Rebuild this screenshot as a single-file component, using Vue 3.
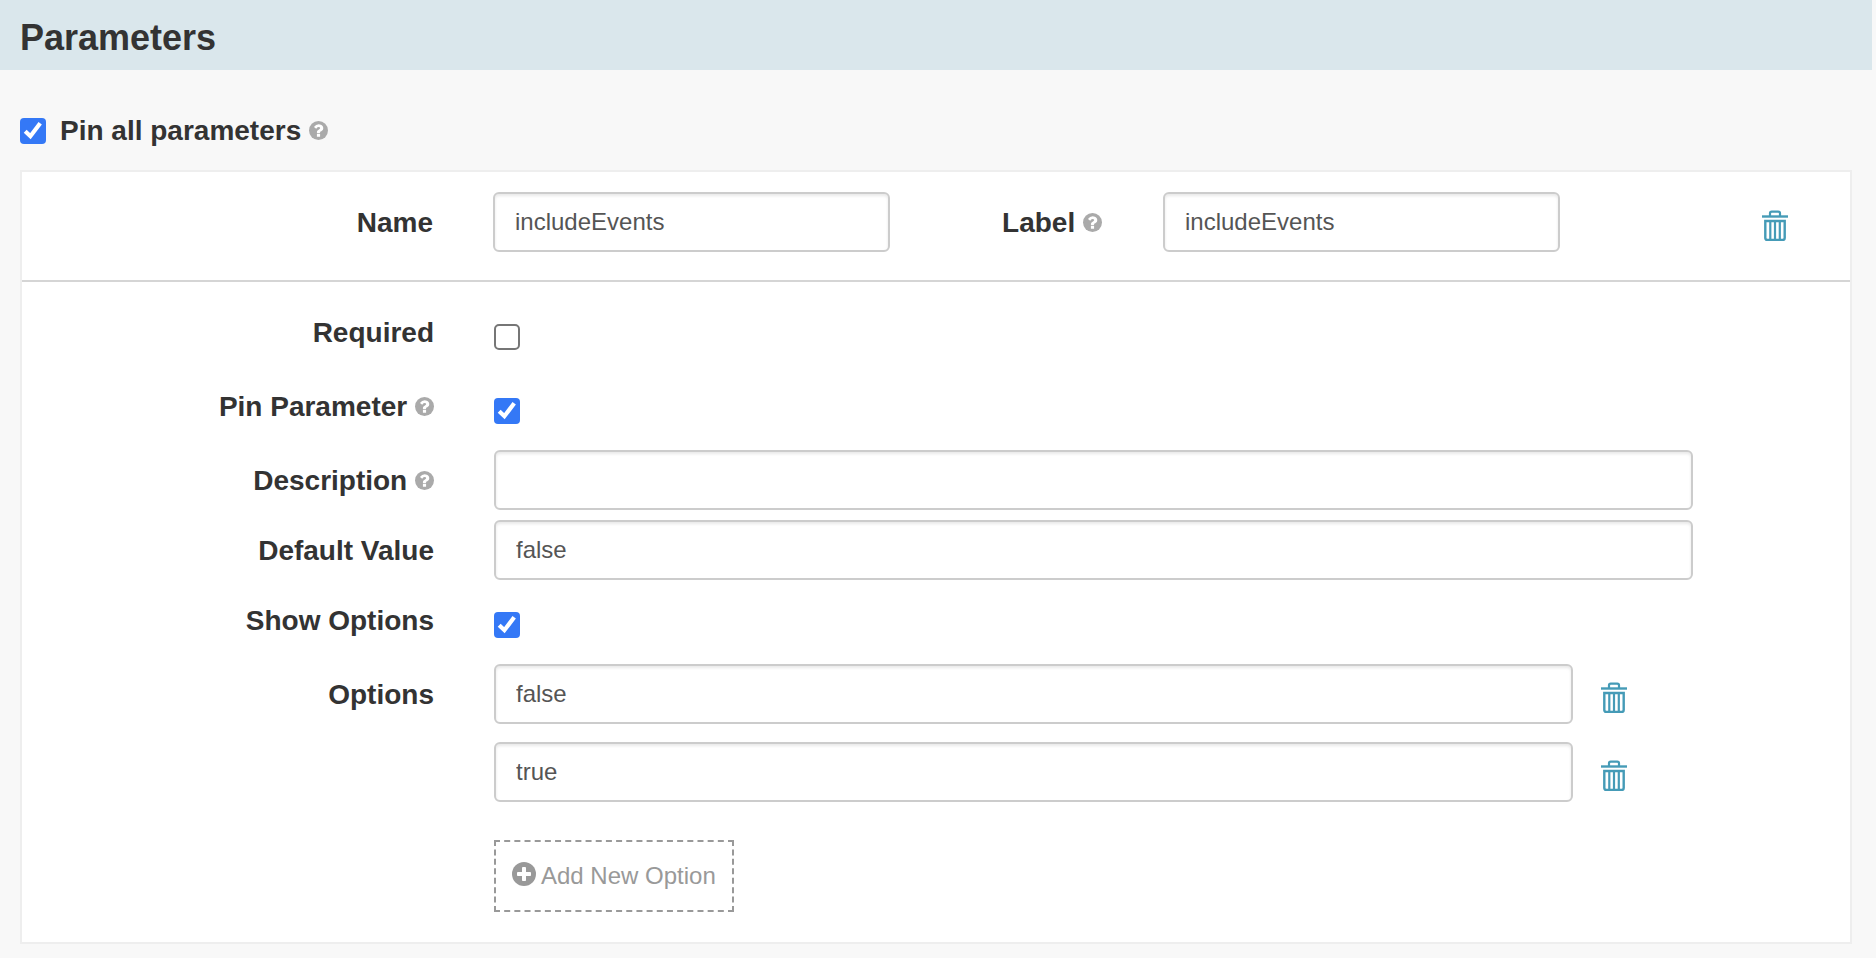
<script setup>
import { h, reactive } from 'vue'

const question = 'M1024 1376v-192q0-14-9-23t-23-9h-192q-14 0-23 9t-9 23v192q0 14 9 23t23 9h192q14 0 23-9t9-23zM1280 704q0-88-55.500-163t-138.500-116-170-41q-243 0-371 213-15 24 8 42l132 100q7 6 19 6 16 0 25-12 53-68 86-92 34-24 86-24 48 0 85.500 26t37.500 59q0 38-20 61t-68 45q-63 28-115.500 86.500t-52.500 125.500v36q0 14 9 23t23 9h192q14 0 23-9t9-23q0-19 21.500-49.500t54.500-49.500q32-18 49-28.500t46-35 44.500-48 28-60.500 12.500-81z'
const plus = 'M1344 960v-128q0-26-19-45t-45-19h-256v-256q0-26-19-45t-45-19h-128q-26 0-45 19t-19 45v256h-256q-26 0-45 19t-19 45v128q0 26 19 45t45 19h256v256q0 26 19 45t45 19h128q26 0 45-19t19-45v-256h256q26 0 45-19t19-45z'

const RoundIcon = (props) =>
  h('svg', { viewBox: '128 128 1536 1536', 'aria-hidden': 'true' }, [
    h('circle', { cx: 896, cy: 896, r: 768, fill: 'currentColor' }),
    h('path', { d: props.glyph, fill: '#fff' }),
  ])
RoundIcon.props = ['glyph']

const TrashIcon = () =>
  h('svg', { viewBox: '0 0 26 31', fill: 'none', stroke: 'currentColor', 'stroke-width': 2.2 }, [
    h('path', { d: 'M0 6.500h26', 'stroke-width': 2.4 }),
    h('path', { d: 'M8 6V3.200q0-1.600 1.700-1.600h6.600q1.700 0 1.700 1.600V6' }),
    h('path', { d: 'M3.300 11h19.400v17q0 2-2 2H5.300q-2 0-2-2z', 'stroke-width': 2.4 }),
    h('path', { d: 'M8.300 11v19M13 11v19M17.800 11v19' }),
  ])

const CheckMark = () =>
  h('svg', { viewBox: '0 0 26 26', fill: 'none', stroke: '#fff', 'stroke-width': 4.2 }, [
    h('path', { d: 'M5.200 13.200L10.400 18.200L20.200 5.200' }),
  ])

const form = reactive({
  pinAll: true,
  name: 'includeEvents',
  label: 'includeEvents',
  required: false,
  pinned: true,
  description: '',
  defaultValue: 'false',
  showOptions: true,
  options: ['false', 'true'],
})
</script>

<template>
  <main class="page">
    <header class="title-bar"><h1>Parameters</h1></header>

    <div class="pin-all">
      <label class="check">
        <input v-model="form.pinAll" type="checkbox" />
        <CheckMark v-if="form.pinAll" />
      </label>
      <span class="caption">Pin all parameters</span>
      <RoundIcon class="help" :glyph="question" />
    </div>

    <section class="panel">
      <div class="panel-head">
        <div class="caption name-caption">Name</div>
        <input v-model="form.name" class="field" type="text" />
        <div class="caption label-caption">Label <RoundIcon class="help" :glyph="question" /></div>
        <input v-model="form.label" class="field" type="text" />
        <button class="trash head-trash" type="button"><TrashIcon /></button>
      </div>

      <div class="rows">
        <div class="row loose">
          <div class="caption">Required</div>
          <label class="check">
            <input v-model="form.required" type="checkbox" />
            <CheckMark v-if="form.required" />
          </label>
        </div>
        <div class="row loose">
          <div class="caption">Pin Parameter <RoundIcon class="help" :glyph="question" /></div>
          <label class="check">
            <input v-model="form.pinned" type="checkbox" />
            <CheckMark v-if="form.pinned" />
          </label>
        </div>
        <div class="row">
          <div class="caption">Description <RoundIcon class="help" :glyph="question" /></div>
          <input v-model="form.description" class="field" type="text" />
        </div>
        <div class="row">
          <div class="caption">Default Value</div>
          <input v-model="form.defaultValue" class="field" type="text" />
        </div>
        <div class="row loose">
          <div class="caption">Show Options</div>
          <label class="check">
            <input v-model="form.showOptions" type="checkbox" />
            <CheckMark v-if="form.showOptions" />
          </label>
        </div>
        <div v-if="form.showOptions" class="row options-row">
          <div class="caption">Options</div>
          <div class="options">
            <div v-for="(option, i) in form.options" :key="i" class="option">
              <input v-model="form.options[i]" class="field" type="text" />
              <button class="trash" type="button" @click="form.options.splice(i, 1)"><TrashIcon /></button>
            </div>
            <button class="add" type="button" @click="form.options.push('')">
              <RoundIcon class="plus" :glyph="plus" /><span>Add New Option</span>
            </button>
          </div>
        </div>
      </div>
    </section>
  </main>
</template>

<style>
body {
  margin: 0;
  background: #f8f8f8;
}
</style>

<style scoped>
* {
  box-sizing: border-box;
}
.page {
  height: 958px;
  overflow: hidden;
  background: #f8f8f8;
  color: #333;
  font-family: "Liberation Sans", Arial, sans-serif;
}
.title-bar {
  width: 1872px;
  height: 70px;
  padding-left: 20px;
  background: #dae7ec;
}
h1 {
  margin: 0;
  font-size: 36px;
  line-height: 76px;
  font-weight: 700;
}
.pin-all {
  display: flex;
  align-items: center;
  height: 60px;
  margin: 30px 0 10px 20px;
}
.pin-all .check {
  margin: 2px 14px 0 0;
}
.caption {
  height: 60px;
  font-size: 28px;
  line-height: 62px;
  font-weight: 700;
  white-space: nowrap;
}
.caption .help,
.pin-all .help {
  display: inline-block;
  width: 19px;
  height: 19px;
  color: #aaa;
}
.caption .help {
  vertical-align: 0.5px;
}
.pin-all .help {
  margin-left: 8px;
}
.panel {
  width: 1832px;
  height: 774px;
  margin-left: 20px;
  border: 2px solid #eee;
  background: #fff;
}
.panel-head {
  display: flex;
  height: 110px;
  padding-top: 20px;
  border-bottom: 2px solid #d5d5d5;
}
.name-caption {
  width: 411px;
  margin-right: 60px;
  text-align: right;
}
.panel-head .field {
  width: 397px;
}
.label-caption {
  width: 212px;
  margin-right: 61px;
  text-align: right;
}
.rows {
  display: flex;
  flex-direction: column;
  gap: 10px;
  padding-top: 20px;
}
.row {
  display: grid;
  grid-template-columns: 412px 1199px;
  column-gap: 60px;
  min-height: 60px;
}
.row > .caption {
  text-align: right;
}
.row.loose {
  margin-bottom: 4px;
}
.row > .check {
  margin-top: 22px;
}
.field {
  display: block;
  width: 100%;
  height: 60px;
  margin: 0;
  padding: 0 20px;
  border: 2px solid #ccc;
  border-radius: 6px;
  outline: none;
  background: #fff;
  box-shadow: inset 0 2px 3px rgba(0, 0, 0, 0.09);
  color: #555;
  font-family: inherit;
  font-size: 24px;
}
.check {
  display: grid;
  width: 26px;
  height: 26px;
}
.check > * {
  grid-area: 1 / 1;
  width: 26px;
  height: 26px;
}
.check > svg {
  z-index: 1;
  pointer-events: none;
}
.check input {
  margin: 0;
  appearance: none;
  border: 2px solid #767676;
  border-radius: 5px;
  background: #fff;
}
.check input:checked {
  border: 0;
  border-radius: 4px;
  background: #3478f6;
}
.options {
  display: flex;
  flex-direction: column;
  align-items: flex-start;
  gap: 18px;
}
.option {
  display: flex;
}
.option .field {
  width: 1079px;
}
.trash {
  width: 26px;
  height: 31px;
  margin: 18px 0 0 28px;
  padding: 0;
  border: 0;
  background: none;
  color: #459bb7;
}
.head-trash {
  margin-left: 202px;
}
.trash svg {
  display: block;
  width: 26px;
  height: 31px;
}
.add {
  display: flex;
  align-items: center;
  width: 240px;
  height: 72px;
  margin-top: 20px;
  padding: 0 0 0 16px;
  border: 2px dashed #999;
  background: #fff;
  color: #999;
  font-family: inherit;
  font-size: 24px;
  line-height: 68px;
  white-space: nowrap;
}
.plus {
  width: 24px;
  height: 24px;
  margin: -4px 5px 0 0;
}
</style>
